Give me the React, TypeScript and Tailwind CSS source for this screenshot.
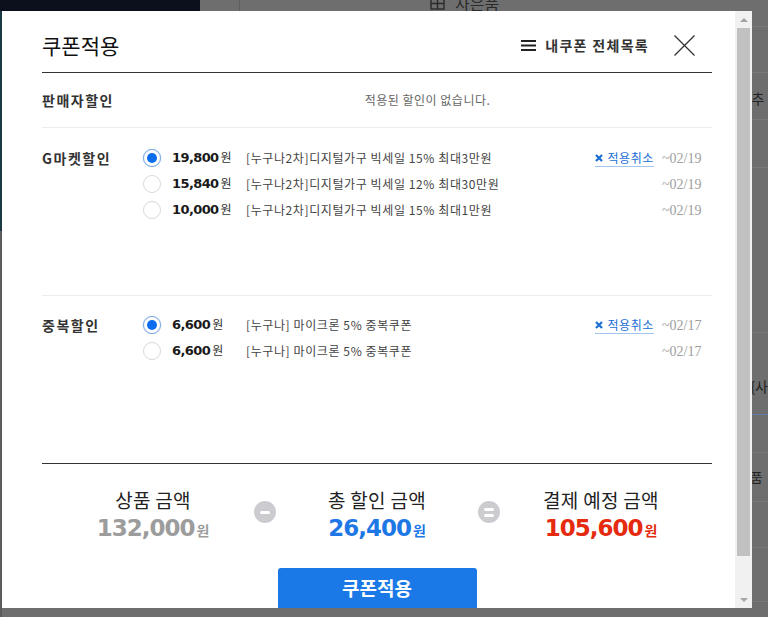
import React from 'react'

type Coupon = {
  amount: string
  name: string
  until: string
  checked?: boolean
}

const gmarketCoupons: Coupon[] = [
  { amount: '19,800', name: '[누구나2차]디지털가구 빅세일 15% 최대3만원', until: '~02/19', checked: true },
  { amount: '15,840', name: '[누구나2차]디지털가구 빅세일 12% 최대30만원', until: '~02/19' },
  { amount: '10,000', name: '[누구나2차]디지털가구 빅세일 15% 최대1만원', until: '~02/19' },
]

const dupCoupons: Coupon[] = [
  { amount: '6,600', name: '[누구나] 마이크론 5% 중복쿠폰', until: '~02/17', checked: true },
  { amount: '6,600', name: '[누구나] 마이크론 5% 중복쿠폰', until: '~02/17' },
]

function Radio({ checked }: { checked?: boolean }) {
  if (checked) {
    return (
      <span className="flex h-[18px] w-[18px] shrink-0 items-center justify-center rounded-full border border-[#7ea8e4] bg-white shadow-[0_0_1px_#9cbff0]">
        <span className="h-[10px] w-[10px] rounded-full bg-[#0b6cf0]" />
      </span>
    )
  }
  return <span className="h-[18px] w-[18px] shrink-0 rounded-full border border-[#d9d9d9] bg-white" />
}

function CouponRow({ coupon }: { coupon: Coupon }) {
  return (
    <div className="flex h-[26px] items-center">
      <Radio checked={coupon.checked} />
      <div className="ml-[11px] flex w-[74px] shrink-0 items-baseline">
        <span className="font-['DejaVu_Sans',sans-serif] text-[13px] font-bold tracking-[-0.6px] text-[#1a1a1a]">
          {coupon.amount}
        </span>
        <span className="ml-[2px] text-[12px] text-[#333]">원</span>
      </div>
      <span className="flex-1 text-[12px] tracking-[0.6px] text-[#444]">{coupon.name}</span>
      {coupon.checked && (
        <button className="flex h-[18px] items-center gap-[4px] border-b border-[#a3c4ee] text-[12px] tracking-[0.6px] text-[#1a6fd6]">
          <svg width="8" height="8" viewBox="0 0 8 8">
            <path d="M1 1L7 7M7 1L1 7" stroke="#1a6fd6" strokeWidth="2.2" />
          </svg>
          적용취소
        </button>
      )}
      <span className="ml-[8px] w-[40px] shrink-0 font-['Liberation_Serif',serif] text-[14px] text-[#9e9e9e]">
        {coupon.until}
      </span>
    </div>
  )
}

function Section({ label, coupons, pt, last }: { label: string; coupons: Coupon[]; pt: string; last?: boolean }) {
  return (
    <div className={`flex h-[168px] ${pt} ${last ? 'border-b border-[#333]' : 'border-b border-[#ececec]'}`}>
      <div className="w-[101px] shrink-0 text-[14px] font-bold leading-[26px] tracking-[1.5px] text-[#333]">{label}</div>
      <div className="flex-1 pr-[10px]">
        {coupons.map((c, i) => (
          <CouponRow key={i} coupon={c} />
        ))}
      </div>
    </div>
  )
}

function OpCircle({ kind }: { kind: 'minus' | 'equals' }) {
  return (
    <div className="mt-[15px] flex h-[22px] w-[22px] shrink-0 flex-col items-center justify-center gap-[3px] rounded-full bg-[#cbcbd0]">
      <span className="h-[3px] w-[10px] rounded-full bg-white" />
      {kind === 'equals' && <span className="h-[3px] w-[10px] rounded-full bg-white" />}
    </div>
  )
}

function Total({ label, amount, color }: { label: string; amount: string; color: string }) {
  return (
    <div className="flex w-[160px] shrink-0 flex-col items-center">
      <div className="text-[19px] leading-[28px] tracking-[0.3px] text-[#222]">{label}</div>
      <div className={`flex items-baseline leading-[28px] ${color}`}>
        <span className="font-['DejaVu_Sans',sans-serif] text-[23px] font-bold tracking-[-1px]">{amount}</span>
        <span className="ml-[2px] text-[14px] font-bold">원</span>
      </div>
    </div>
  )
}

function Scrollbar() {
  return (
    <div className="flex w-[17px] shrink-0 flex-col bg-[#f1f1f1]">
      <div className="flex h-[17px] items-center justify-center">
        <span className="h-0 w-0 border-x-[4px] border-b-[4px] border-x-transparent border-b-[#a3a3a3]" />
      </div>
      <div className="mx-[2px] h-[528px] bg-[#c1c1c1]" />
      <div className="flex-1" />
      <div className="flex h-[17px] items-center justify-center">
        <span className="h-0 w-0 border-x-[4px] border-t-[4px] border-x-transparent border-t-[#a3a3a3]" />
      </div>
    </div>
  )
}

function BackgroundPage() {
  return (
    <div className="flex h-full flex-col">
      {/* top strip of the page under the overlay */}
      <div className="flex h-[11px] shrink-0 overflow-hidden">
        <div className="w-[200px] bg-[#0c101c]" />
        <div className="w-[40px] border-r border-[#5e5e5e]" />
        <div className="flex flex-1 items-end pl-[190px]">
          <div className="-mb-[2px] flex items-center gap-[10px] text-[16px] leading-[20px] text-[#2a2a2a]">
            <svg width="15" height="14" viewBox="0 0 15 14">
              <rect x="1" y="3" width="13" height="10" fill="none" stroke="#2a2a2a" strokeWidth="1.4" />
              <path d="M1 7.5H14M7.5 3V13" stroke="#2a2a2a" strokeWidth="1.4" />
            </svg>
            사은품
          </div>
        </div>
      </div>
      <div className="flex flex-1">
        <div className="flex w-[2px] flex-col">
          <div className="h-[220px] bg-[#1c3946]" />
          <div className="flex-1 bg-[#5c5c5c]" />
        </div>
        <div className="w-[750px]" />
        <div className="flex flex-1 flex-col text-[14px] text-[#222]">
          <div className="h-[16px] border-b border-[#7a7a7a]" />
          <div className="h-[46px] border-b border-[#7a7a7a]" />
          <div className="flex h-[47px] items-end border-b border-[#7a7a7a] pb-[10px] pl-[1px]">추</div>
          <div className="h-[48px] border-b border-[#7a7a7a]" />
          <div className="h-[165px] border-b border-[#7a7a7a]" />
          <div className="flex h-[82px] items-end border-b border-[#5f7fa8] pb-[17px]">{'{사'}</div>
          <div className="h-[38px] border-b border-[#7a7a7a]" />
          <div className="flex h-[49px] items-center border-b border-[#7a7a7a] text-[13px]">품</div>
          <div className="h-[46px] border-b border-[#7a7a7a]" />
          <div className="h-[54px] border-b border-[#7a7a7a]" />
          <div className="flex-1" />
        </div>
      </div>
    </div>
  )
}

export default function App() {
  return (
    <div className="relative h-[617px] w-[768px] overflow-hidden bg-[#6e6e6e] font-['Noto_Sans_CJK_KR',sans-serif]">
      <BackgroundPage />

      {/* coupon modal */}
      <div className="absolute left-[2px] top-[11px] flex h-[597px] w-[750px] bg-white">
        <div className="flex-1 overflow-hidden pl-[40px] pr-[23px]">
          <div className="flex h-[62px] items-center justify-between border-b border-[#333] pr-[17px] pt-[7px]">
            <h1 className="text-[21px] leading-[28px] text-[#111]">쿠폰적용</h1>
            <div className="flex items-center">
              <button className="flex items-center gap-[9px] text-[14px] font-bold tracking-[1.3px] text-[#333]">
                <svg width="15" height="11" viewBox="0 0 15 11">
                  <rect x="0" y="0" width="15" height="2" fill="#222" />
                  <rect x="0" y="4.5" width="15" height="2" fill="#222" />
                  <rect x="0" y="9" width="15" height="2" fill="#222" />
                </svg>
                내쿠폰 전체목록
              </button>
              <button className="ml-[25px]">
                <svg width="21" height="21" viewBox="0 0 21 21">
                  <path d="M0.5 0.5L20.5 20.5M20.5 0.5L0.5 20.5" stroke="#333" strokeWidth="1.3" />
                </svg>
              </button>
            </div>
          </div>

          <div className="flex h-[55px] items-center border-b border-[#ececec]">
            <div className="w-[101px] shrink-0 text-[14px] font-bold tracking-[1.5px] text-[#333]">판매자할인</div>
            <div className="flex-1 text-center text-[12px] tracking-[0.5px] text-[#666]">적용된 할인이 없습니다.</div>
          </div>

          <Section label="G마켓할인" coupons={gmarketCoupons} pt="pt-[17px]" />
          <Section label="중복할인" coupons={dupCoupons} pt="pt-[16px]" last />

          <div className="flex items-start justify-center gap-[21px] pt-[22px]">
            <Total label="상품 금액" amount="132,000" color="text-[#9c9c9c]" />
            <OpCircle kind="minus" />
            <Total label="총 할인 금액" amount="26,400" color="text-[#1d78e6]" />
            <OpCircle kind="equals" />
            <Total label="결제 예정 금액" amount="105,600" color="text-[#e52a10]" />
          </div>

          <div className="mt-[24px] flex justify-center">
            <button className="h-[44px] w-[199px] rounded-[3px] bg-[#1b79e7] pb-[4px] text-[19px] font-bold text-white">
              쿠폰적용
            </button>
          </div>
        </div>
        <Scrollbar />
      </div>
    </div>
  )
}
